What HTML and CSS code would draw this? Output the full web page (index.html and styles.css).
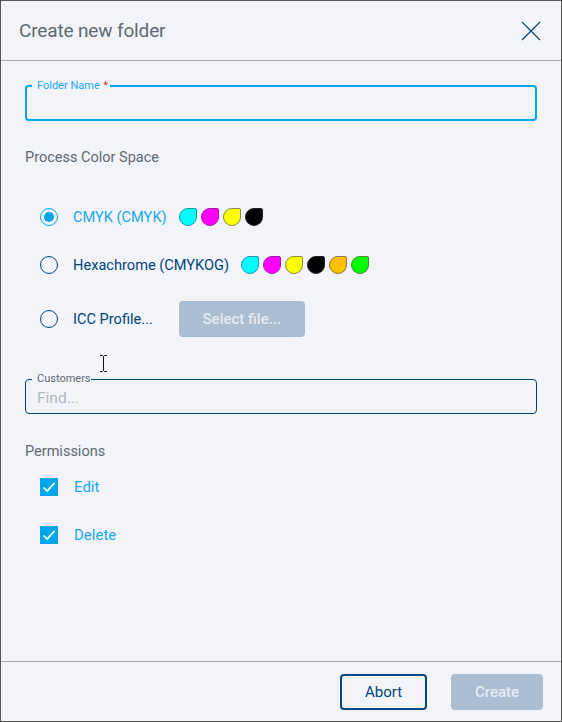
FILE: index.html
```html
<!DOCTYPE html>
<html lang="en">
<head>
  <meta charset="UTF-8" />
  <title>Create new folder</title>
  <link rel="stylesheet" href="styles.css">
</head>
<body>
  <div class="dialog">
    <div class="dialog-header">
      <h1>Create new folder</h1>
      <button class="close-btn" aria-label="Close">
        <svg width="20" height="20" viewBox="0 0 20 20"><path d="M1 1L19 19M19 1L1 19" stroke="#00457c" stroke-width="1.1" fill="none" /></svg>
      </button>
    </div>

    <div class="dialog-body">
      <fieldset class="field field-active">
        <legend>Folder Name <span class="required">*</span></legend>
        <input type="text" />
      </fieldset>

      <div class="section-title color-title">Process Color Space</div>

      <div class="radio-list">
        <div class="radio-row">
          <span class="radio radio-on"></span>
          <span class="radio-label label-on">CMYK (CMYK)</span>
          <div class="drops">
            <span class="drop cyan"></span>
            <span class="drop magenta"></span>
            <span class="drop yellow"></span>
            <span class="drop black"></span>
          </div>
        </div>
        <div class="radio-row">
          <span class="radio"></span>
          <span class="radio-label">Hexachrome (CMYKOG)</span>
          <div class="drops">
            <span class="drop cyan"></span>
            <span class="drop magenta"></span>
            <span class="drop yellow"></span>
            <span class="drop black"></span>
            <span class="drop orange"></span>
            <span class="drop green"></span>
          </div>
        </div>
        <div class="radio-row">
          <span class="radio"></span>
          <span class="radio-label">ICC Profile...</span>
          <button class="btn btn-disabled select-btn">Select file...</button>
        </div>
      </div>

      <fieldset class="field field-customers">
        <legend>Customers</legend>
        <input type="text" placeholder="Find..." />
      </fieldset>

      <div class="section-title perm-title">Permissions</div>

      <div class="check-list">
        <div class="check-row">
          <span class="check"><svg width="18" height="18" viewBox="0 0 18 18"><path d="M3.5 9.5L7.2 13L14.5 5" stroke="#fff" stroke-width="1.7" fill="none" /></svg></span>
          <span class="check-label">Edit</span>
        </div>
        <div class="check-row">
          <span class="check"><svg width="18" height="18" viewBox="0 0 18 18"><path d="M3.5 9.5L7.2 13L14.5 5" stroke="#fff" stroke-width="1.7" fill="none" /></svg></span>
          <span class="check-label">Delete</span>
        </div>
      </div>
    </div>

    <div class="dialog-footer">
      <button class="btn btn-outline">Abort</button>
      <button class="btn btn-disabled create-btn">Create</button>
    </div>

    <svg class="text-cursor" width="9" height="17" viewBox="0 0 9 17"><path d="M1 .5H3.5L4.5 1.5L5.5 .5H8M4.5 1.5V15.5M1 16.5H3.5L4.5 15.5L5.5 16.5H8" stroke="#111" fill="none" /></svg>
  </div>
</body>
</html>
```

FILE: styles.css
```css
* {
  box-sizing: border-box;
}

body {
  margin: 0;
  font-family: Roboto, "Liberation Sans", sans-serif;
  color: #00457c;
  background-color: #f2f4f9;
}

.dialog {
  position: relative;
  display: flex;
  flex-direction: column;
  width: 562px;
  height: 722px;
  border: 1px solid #555;
  background-color: #f2f4f9;
}

.dialog-header {
  display: flex;
  justify-content: space-between;
  align-items: center;
  height: 60px;
  flex-shrink: 0;
  padding: 0 20px 0 18px;
  border-bottom: 1px solid #a6a8ac;
}

.dialog-header h1 {
  margin: 0;
  font-size: 19px;
  font-weight: 400;
  letter-spacing: -0.15px;
  color: #5f6973;
}

.close-btn {
  display: flex;
  padding: 0;
  border: none;
  background: none;
}

.dialog-body {
  flex: 1;
  padding: 18px 24px 0;
}

.field {
  margin: 0;
  padding: 0 11px;
  height: 42px;
  border: 1px solid #00457c;
  border-radius: 4px;
}

.field legend {
  margin-left: -5px;
  padding: 0 0 0 5px;
  font-size: 11px;
  line-height: 14px;
  color: #5f6973;
}

.field input {
  display: block;
  width: 100%;
  height: 24px;
  padding: 0;
  border: none;
  outline: none;
  background: none;
  font-family: inherit;
  font-size: 15.5px;
}

.field input::placeholder {
  color: #b3b8c0;
}

.field-active {
  padding: 0 10px;
  border: 2px solid #00a5ec;
}

.field-active legend {
  padding-right: 2px;
  color: #1aa7ec;
}

.required {
  margin-left: 1px;
  font-size: 10px;
  color: #e8112d;
}

.field-customers {
  margin-top: 35px;
}

.section-title {
  font-size: 14.5px;
  color: #5f6973;
}

.color-title {
  margin-top: 28px;
}

.perm-title {
  margin-top: 29px;
}

.radio-list {
  display: flex;
  flex-direction: column;
  gap: 24px;
  margin-top: 39px;
  padding-left: 15px;
}

.radio-row {
  display: flex;
  align-items: center;
  min-height: 24px;
}

.radio {
  flex-shrink: 0;
  display: flex;
  justify-content: center;
  align-items: center;
  width: 18px;
  height: 18px;
  border: 1px solid #00457c;
  border-radius: 50%;
}

.radio-on {
  border-color: #00a5ec;
}

.radio-on::before {
  content: "";
  width: 10px;
  height: 10px;
  border-radius: 50%;
  background-color: #00a5ec;
}

.radio-label {
  margin-left: 15px;
  font-size: 14.6px;
}

.label-on {
  color: #1aa7ec;
}

.drops {
  display: flex;
  gap: 4px;
  margin-left: 12px;
}

.drop {
  width: 18px;
  height: 18px;
  border: 1px solid #777;
  border-radius: 50% 2px 50% 50%;
}

.cyan { background-color: #00ffff; border-color: #169aa0; }
.magenta { background-color: #ff00ff; border-color: #a01a9c; }
.yellow { background-color: #ffff00; border-color: #8a8a3c; }
.black { background-color: #000; border-color: #222; }
.orange { background-color: #ffc000; border-color: #8a7a3c; }
.green { background-color: #00ff00; border-color: #3c8a3c; }

.btn {
  height: 36px;
  border-radius: 4px;
  font-family: inherit;
  font-size: 15px;
  font-weight: 500;
}

.btn-disabled {
  border: none;
  background-color: #aabdd1;
  color: #e6ebf2;
}

.btn-outline {
  width: 87px;
  border: 2px solid #00457c;
  background: none;
  color: #00457c;
  font-weight: 400;
}

.select-btn {
  width: 126px;
  margin-left: 26px;
}

.create-btn {
  width: 92px;
}

.check-list {
  margin-top: 18px;
  padding-left: 15px;
}

.check-row {
  display: flex;
  align-items: center;
  height: 18px;
  margin-bottom: 30px;
}

.check {
  display: flex;
  width: 18px;
  height: 18px;
  background-color: #00a5ec;
}

.check-label {
  margin-left: 16px;
  font-size: 15px;
  color: #1aa7ec;
}

.dialog-footer {
  display: flex;
  justify-content: flex-end;
  gap: 24px;
  height: 60px;
  flex-shrink: 0;
  padding: 12px 18px 0 0;
  border-top: 1px solid #a6a8ac;
}

.text-cursor {
  position: absolute;
  left: 98px;
  top: 354px;
}
```
